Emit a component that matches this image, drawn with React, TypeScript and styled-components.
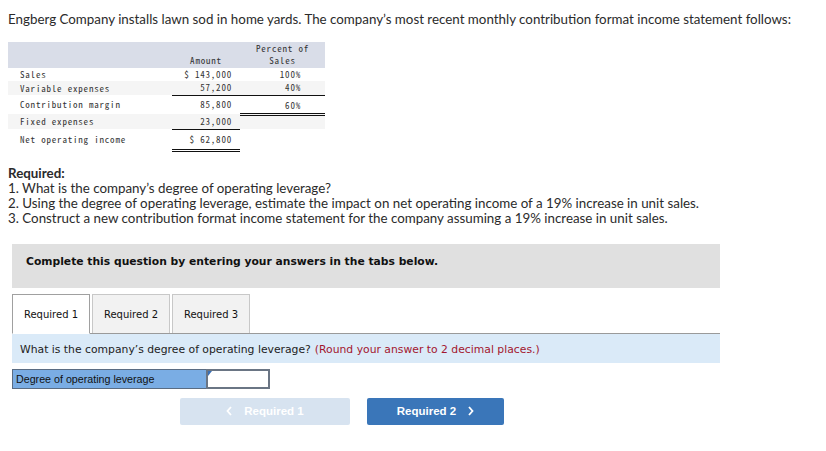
import React from "react";
import styled, { createGlobalStyle } from "styled-components";

const GlobalStyle = createGlobalStyle`
  body {
    margin: 0;
    background: #fff;
  }
`;

interface Row {
  label: string;
  amount: string;
  percent?: string;
  shaded?: boolean;
  height: number;
  amountLine?: "single" | "double";
  percentLine?: "single" | "double";
  percentTop?: boolean;
}

const rows: Row[] = [
  { label: "Sales", amount: "$ 143,000", percent: "100%", height: 13 },
  {
    label: "Variable expenses",
    amount: "57,200",
    percent: "40%",
    shaded: true,
    height: 14,
    amountLine: "single",
    percentLine: "single",
  },
  {
    label: "Contribution margin",
    amount: "85,800",
    percent: "60%",
    height: 19,
    percentLine: "double",
    percentTop: true,
  },
  { label: "Fixed expenses", amount: "23,000", shaded: true, height: 15, amountLine: "single" },
  { label: "Net operating income", amount: "$ 62,800", height: 21, amountLine: "double" },
];

const Page = styled.div`
  padding: 11px 8px 0 8px;
  color: #333;
`;

const Intro = styled.p`
  margin: 0;
  font-family: Lato, "Liberation Sans", sans-serif;
  font-size: 13.35px;
  line-height: 16px;
  color: #2b2b2b;
`;

const Statement = styled.table`
  margin-top: 15px;
  border-collapse: collapse;
  font-family: "Noto Sans Mono CJK KR", "Liberation Mono", monospace;
  font-size: 9px;
  letter-spacing: 0.8px;
  color: #333;
  table-layout: fixed;
  width: 317px;
`;

const HeadRow = styled.tr`
  background: #d9dde8;
  height: 26px;
`;

const HeadCell = styled.th<{ $w: number }>`
  width: ${(p) => p.$w}px;
  padding: 0;
  font-weight: normal;
  text-align: center;
  vertical-align: bottom;
  line-height: 12px;
  padding-bottom: 1px;
`;

const BodyRow = styled.tr<{ $shaded?: boolean; $h: number }>`
  background: ${(p) => (p.$shaded ? "#f5f5f5" : "#fff")};
  height: ${(p) => p.$h}px;
`;

const LabelCell = styled.td`
  padding: 0 0 0 12px;
  white-space: nowrap;
  vertical-align: middle;
`;

const lineStyle = (l?: "single" | "double") =>
  l === "single" ? "1px solid #111" : l === "double" ? "3px double #111" : "none";

const AmountCell = styled.td<{ $line?: "single" | "double" }>`
  padding: 0 8px 0 0;
  text-align: right;
  vertical-align: middle;
  border-bottom: ${(p) => lineStyle(p.$line)};
`;

const PercentCell = styled.td<{ $line?: "single" | "double"; $top?: boolean }>`
  padding: ${(p) => (p.$top ? "3px" : "0")} 24px 0 0;
  text-align: right;
  vertical-align: ${(p) => (p.$top ? "top" : "middle")};
  border-bottom: ${(p) => lineStyle(p.$line)};
`;

const Required = styled.div`
  margin-top: 14px;
  font-family: Lato, "Liberation Sans", sans-serif;
  font-size: 13.35px;
  line-height: 15px;
  color: #2b2b2b;
  p {
    margin: 0;
  }
`;

const ReqTitle = styled.p`
  font-weight: bold;
`;

const Panel = styled.div`
  margin-left: 4px;
  width: 708px;
`;

const Instruction = styled.div`
  margin-top: 18px;
  height: 44px;
  box-sizing: border-box;
  background: #e0e0e0;
  padding: 11px 0 0 14px;
  font-family: "DejaVu Sans", Verdana, sans-serif;
  font-weight: bold;
  font-size: 10.75px;
  color: #111;
`;

const TabStrip = styled.div`
  margin-top: 6px;
  display: flex;
  gap: 2px;
  border-bottom: 1px solid #9a9a9a;
  height: 39px;
`;

const Tab = styled.div<{ $active?: boolean }>`
  width: 78px;
  height: 39px;
  box-sizing: border-box;
  display: flex;
  align-items: center;
  justify-content: center;
  padding-top: 2px;
  font-family: "DejaVu Sans", Verdana, sans-serif;
  font-size: 10px;
  color: #111;
  background: ${(p) => (p.$active ? "#fff" : "#f2f2f2")};
  border: 1px solid ${(p) => (p.$active ? "#a0a0a0" : "#c8c8c8")};
  border-bottom: ${(p) => (p.$active ? "1px solid #fff" : "none")};
  ${(p) => (p.$active ? "margin-bottom: -1px; height: 40px;" : "")}
`;

const Question = styled.div`
  height: 29px;
  background: #daeaf8;
  display: flex;
  align-items: center;
  padding: 2px 0 0 8px;
  box-sizing: border-box;
  font-family: "DejaVu Sans", Verdana, sans-serif;
  font-size: 10.8px;
  color: #222;
`;

const Hint = styled.span`
  color: #a3162e;
  margin-left: 4px;
`;

const AnswerRow = styled.div`
  margin-top: 6px;
  display: flex;
  height: 20px;
`;

const AnswerLabel = styled.div`
  width: 194px;
  box-sizing: border-box;
  background: #7aade4;
  border: 1px solid #5a6c82;
  border-right: none;
  display: flex;
  align-items: center;
  padding-left: 3px;
  font-family: "Liberation Sans", Arial, sans-serif;
  font-size: 10.7px;
  color: #111;
`;

const AnswerInput = styled.div`
  position: relative;
  width: 64px;
  box-sizing: border-box;
  background: #fff;
  border: 2px solid #6a7584;
`;

const Marker = styled.span`
  position: absolute;
  top: 0;
  left: 0;
  width: 0;
  height: 0;
  border-top: 5px solid #3a6fb5;
  border-right: 4px solid transparent;
`;

const Nav = styled.div`
  margin-top: 9px;
  display: flex;
  gap: 17px;
  padding-left: 168px;
`;

const NavButton = styled.div<{ $disabled?: boolean; $w: number }>`
  width: ${(p) => p.$w}px;
  height: 27px;
  border-radius: 2px;
  background: ${(p) => (p.$disabled ? "#d7e3f0" : "#3a76b9")};
  color: #fff;
  display: flex;
  align-items: center;
  justify-content: center;
  gap: 12px;
  font-family: "Liberation Sans", Arial, sans-serif;
  font-weight: bold;
  font-size: 11.5px;
`;

const Chevron = ({ dir }: { dir: "left" | "right" }) => (
  <svg width="6" height="10" viewBox="0 0 6 10">
    <path
      d={dir === "left" ? "M5 1 L1.5 5 L5 9" : "M1 1 L4.5 5 L1 9"}
      fill="none"
      stroke="#fff"
      strokeWidth="1.8"
    />
  </svg>
);

export default function App() {
  return (
    <>
      <GlobalStyle />
      <Page>
        <Intro>
          Engberg Company installs lawn sod in home yards. The company’s most recent monthly
          contribution format income statement follows:
        </Intro>

        <Statement>
          <thead>
            <HeadRow>
              <HeadCell $w={164}></HeadCell>
              <HeadCell $w={68}>Amount</HeadCell>
              <HeadCell $w={85}>
                Percent of
                <br />
                Sales
              </HeadCell>
            </HeadRow>
          </thead>
          <tbody>
            {rows.map((r) => (
              <BodyRow key={r.label} $shaded={r.shaded} $h={r.height}>
                <LabelCell>{r.label}</LabelCell>
                <AmountCell $line={r.amountLine}>{r.amount}</AmountCell>
                <PercentCell $line={r.percentLine} $top={r.percentTop}>
                  {r.percent}
                </PercentCell>
              </BodyRow>
            ))}
          </tbody>
        </Statement>

        <Required>
          <ReqTitle>Required:</ReqTitle>
          <p>1. What is the company’s degree of operating leverage?</p>
          <p>
            2. Using the degree of operating leverage, estimate the impact on net operating income of
            a 19% increase in unit sales.
          </p>
          <p>
            3. Construct a new contribution format income statement for the company assuming a 19%
            increase in unit sales.
          </p>
        </Required>

        <Panel>
          <Instruction>Complete this question by entering your answers in the tabs below.</Instruction>

          <TabStrip>
            <Tab $active>Required 1</Tab>
            <Tab>Required 2</Tab>
            <Tab>Required 3</Tab>
          </TabStrip>

          <Question>
            What is the company’s degree of operating leverage?
            <Hint>(Round your answer to 2 decimal places.)</Hint>
          </Question>

          <AnswerRow>
            <AnswerLabel>Degree of operating leverage</AnswerLabel>
            <AnswerInput>
              <Marker />
            </AnswerInput>
          </AnswerRow>

          <Nav>
            <NavButton $disabled $w={170}>
              <Chevron dir="left" />
              Required 1
            </NavButton>
            <NavButton $w={137}>
              Required 2
              <Chevron dir="right" />
            </NavButton>
          </Nav>
        </Panel>
      </Page>
    </>
  );
}
